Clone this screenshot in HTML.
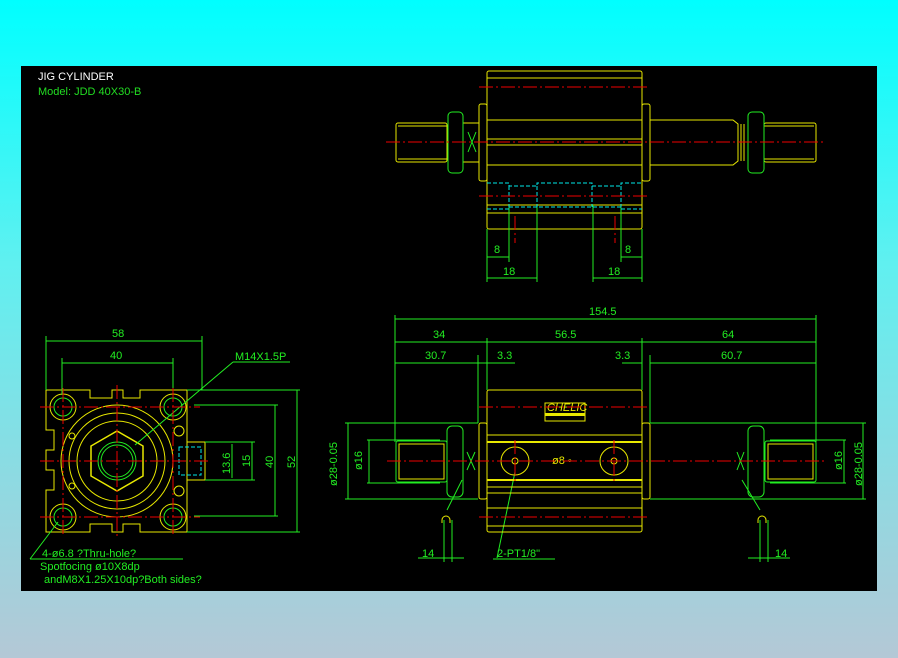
<!DOCTYPE html>
<html><head><meta charset="utf-8"><style>
html,body{margin:0;padding:0;}
body{width:898px;height:658px;background:linear-gradient(#00ffff 0%,#60f0f0 40%,#b4c8d6 100%);position:relative;overflow:hidden;}
svg{position:absolute;left:0;top:0;}
text{font-family:"Liberation Sans",sans-serif;font-size:11px;}
</style></head><body>
<svg width="898" height="658" viewBox="0 0 898 658">
<rect x="21" y="66" width="856" height="525" fill="#000"/>
<text x="38" y="80" fill="#fff" font-size="10.5">JIG  CYLINDER</text>
<text x="38" y="95" fill="#22dd22" font-size="10.5">Model:  JDD  40X30-B</text>

<!-- TOP VIEW -->
<g fill="none" stroke="#e8e800" stroke-width="1">
<rect x="487" y="71" width="155" height="158" rx="2"/>
<line x1="487" y1="78" x2="642" y2="78"/>
<line x1="487" y1="120" x2="642" y2="120"/>
<line x1="487" y1="139" x2="642" y2="139"/>
<line x1="487" y1="145" x2="642" y2="145"/>
<line x1="487" y1="165" x2="642" y2="165"/>
<line x1="487" y1="205" x2="642" y2="205"/>
<line x1="487" y1="213" x2="642" y2="213"/>
<rect x="479" y="104" width="8" height="77" rx="2"/>
<rect x="642" y="104" width="8" height="77" rx="2"/>
<rect x="396" y="123" width="51" height="39" rx="2"/>
<line x1="398" y1="126" x2="447" y2="126"/><line x1="398" y1="159" x2="447" y2="159"/>
<rect x="463" y="123" width="16" height="39"/>
<path d="M650 120 H733 L738 124 V161 L733 165 H650"/>
<rect x="764" y="123" width="52" height="39" rx="2"/>
<line x1="764" y1="126" x2="814" y2="126"/><line x1="764" y1="159" x2="814" y2="159"/>
<line x1="741" y1="124" x2="741" y2="161"/><line x1="744" y1="124" x2="744" y2="161"/>
</g>
<g fill="none" stroke="#22ee22" stroke-width="1">
<rect x="448" y="112" width="15" height="61" rx="4"/>
<rect x="748" y="112" width="16" height="61" rx="4"/>
<path d="M468 132 L476 152 M476 132 L468 152"/>
<line x1="487" y1="229" x2="487" y2="282"/><line x1="509" y1="205" x2="509" y2="262"/>
<line x1="537" y1="205" x2="537" y2="282"/>
<line x1="593" y1="205" x2="593" y2="282"/><line x1="621" y1="205" x2="621" y2="262"/>
<line x1="642" y1="229" x2="642" y2="282"/>
<line x1="487" y1="257" x2="509" y2="257"/><line x1="621" y1="257" x2="642" y2="257"/>
<line x1="487" y1="278" x2="537" y2="278"/><line x1="593" y1="278" x2="642" y2="278"/>
</g>
<g fill="#22ee22">
<text x="494" y="253">8</text><text x="625" y="253">8</text>
<text x="503" y="275">18</text><text x="608" y="275">18</text>
</g>
<g fill="none" stroke="#00e8e8" stroke-width="1" stroke-dasharray="4,2">
<path d="M487 183 H509 V186 H537 V183 H592 V186 H621 V183 H642"/>
<path d="M487 209 H509 V207 H537 H592 H621 V209 H642"/>
<line x1="509" y1="186" x2="509" y2="207"/><line x1="537" y1="186" x2="537" y2="207"/>
<line x1="592" y1="186" x2="592" y2="207"/><line x1="621" y1="186" x2="621" y2="207"/>
</g>
<g stroke="#ee0000" stroke-width="1" stroke-dasharray="14,3,2,3" fill="none">
<line x1="479" y1="87" x2="650" y2="87"/>
<line x1="386" y1="142" x2="826" y2="142"/>
<line x1="479" y1="196" x2="650" y2="196"/>
<line x1="515" y1="216" x2="515" y2="243"/><line x1="615" y1="216" x2="615" y2="243"/>
</g>

<!-- FRONT VIEW -->
<g fill="none" stroke="#22ee22" stroke-width="1">
<line x1="395" y1="315" x2="395" y2="442"/><line x1="816" y1="315" x2="816" y2="442"/>
<line x1="478" y1="355" x2="478" y2="423"/><line x1="487" y1="338" x2="487" y2="390"/>
<line x1="642" y1="338" x2="642" y2="390"/><line x1="650" y1="355" x2="650" y2="423"/>
<line x1="395" y1="319" x2="816" y2="319"/>
<line x1="395" y1="342" x2="816" y2="342"/>
<line x1="395" y1="363" x2="478" y2="363"/><line x1="478" y1="363" x2="515" y2="363"/>
<line x1="622" y1="363" x2="642" y2="363"/><line x1="650" y1="363" x2="816" y2="363"/>
<line x1="345" y1="423" x2="478" y2="423"/><line x1="345" y1="499" x2="478" y2="499"/>
<line x1="348" y1="423" x2="348" y2="499"/>
<line x1="367" y1="440" x2="440" y2="440"/><line x1="367" y1="483" x2="440" y2="483"/>
<line x1="369" y1="440" x2="369" y2="483"/>
<line x1="650" y1="423" x2="866" y2="423"/><line x1="650" y1="499" x2="866" y2="499"/>
<line x1="863" y1="423" x2="863" y2="499"/>
<line x1="770" y1="440" x2="846" y2="440"/><line x1="770" y1="483" x2="846" y2="483"/>
<line x1="844" y1="440" x2="844" y2="483"/>
<rect x="396" y="441" width="51" height="41" rx="2"/>
<rect x="765" y="441" width="51" height="41" rx="2"/>
<rect x="447" y="426" width="16" height="71" rx="5"/>
<rect x="748" y="426" width="16" height="71" rx="5"/>
<path d="M467 452 L475 470 M475 452 L467 470"/>
<path d="M737 452 L744 470 M744 452 L737 470"/>
<line x1="444" y1="520" x2="444" y2="562"/><line x1="452" y1="520" x2="452" y2="562"/>
<line x1="418" y1="558" x2="464" y2="558"/>
<line x1="760" y1="520" x2="760" y2="562"/><line x1="768" y1="520" x2="768" y2="562"/>
<line x1="748" y1="558" x2="790" y2="558"/>
<line x1="515" y1="472" x2="497" y2="558"/><line x1="493" y1="559" x2="555" y2="559"/>
<line x1="462" y1="480" x2="447" y2="510"/><line x1="742" y1="480" x2="760" y2="510"/>
</g>
<g fill="#22ee22">
<text x="589" y="315">154.5</text>
<text x="433" y="338">34</text><text x="555" y="338">56.5</text><text x="722" y="338">64</text>
<text x="425" y="359">30.7</text><text x="497" y="359">3.3</text><text x="615" y="359">3.3</text><text x="721" y="359">60.7</text>
<text x="422" y="557">14</text><text x="775" y="557">14</text>
<text x="497" y="557">2-PT1/8"</text>
<text transform="translate(337,486) rotate(-90)" font-size="10">ø28-0.05</text>
<text transform="translate(362,470) rotate(-90)">ø16</text>
<text transform="translate(842,470) rotate(-90)">ø16</text>
<text transform="translate(862,486) rotate(-90)" font-size="10">ø28-0.05</text>
</g>
<g fill="none" stroke="#e8e800" stroke-width="1">
<rect x="487" y="390" width="155" height="142" rx="2"/>
<rect x="479" y="423" width="8" height="76" rx="2"/>
<rect x="642" y="423" width="8" height="76" rx="2"/>
<line x1="487" y1="435" x2="642" y2="435"/>
<line x1="487" y1="442" x2="642" y2="442" stroke-width="2"/>
<line x1="487" y1="480" x2="642" y2="480" stroke-width="2"/>
<line x1="487" y1="487" x2="642" y2="487"/>
<line x1="487" y1="493" x2="642" y2="493"/>
<line x1="487" y1="508" x2="642" y2="508"/>
<line x1="487" y1="526" x2="642" y2="526"/>
<circle cx="515" cy="461" r="14"/><circle cx="515" cy="461" r="3"/>
<circle cx="614" cy="461" r="14"/><circle cx="614" cy="461" r="3"/>
<rect x="399" y="444" width="45" height="35"/>
<rect x="768" y="444" width="45" height="35"/>
<path d="M442 520 a4 4 0 1 1 8 0 M442 520 v3 M450 520 v3"/>
<path d="M758 520 a4 4 0 1 1 8 0 M758 520 v3 M766 520 v3"/>
<rect x="545" y="403" width="40" height="18"/>
</g>
<rect x="545" y="413" width="40" height="3" fill="#e8e800"/>
<text x="547" y="411" fill="#e8e800" font-size="7" font-style="italic">CHELIC</text>
<text x="552" y="464" fill="#e8e800" font-size="7">ø8 ◦</text>
<g stroke="#ee0000" stroke-width="1" stroke-dasharray="14,3,2,3" fill="none">
<line x1="479" y1="407" x2="650" y2="407"/>
<line x1="387" y1="461" x2="826" y2="461"/>
<line x1="479" y1="517" x2="650" y2="517"/>
<line x1="515" y1="440" x2="515" y2="483"/><line x1="614" y1="440" x2="614" y2="483"/>
</g>

<!-- END VIEW -->
<g fill="none" stroke="#e8e800" stroke-width="1">
<path d="M46 390 H90 V398 H112 V390 H123 V398 H140 V390 H187 V532 H140 V524 H123 V532 H112 V524 H90 V532 H46 V490 H54 V470 H46 V450 H54 V430 H46 Z"/>
<circle cx="117" cy="461" r="56"/>
<circle cx="117" cy="461" r="48"/>
<circle cx="117" cy="461" r="40"/>
<polygon points="117,431 143,446 143,476 117,491 91,476 91,446" stroke-width="1.5"/>
<circle cx="63" cy="407" r="13"/><circle cx="173" cy="407" r="13"/>
<circle cx="63" cy="517" r="13"/><circle cx="173" cy="517" r="13"/>
<circle cx="72" cy="436" r="3"/><circle cx="72" cy="486" r="3"/>
<circle cx="179" cy="431" r="5"/><circle cx="179" cy="491" r="5"/>
<path d="M187 442 H205 V480 H187"/>
</g>
<g fill="none" stroke="#22ee22" stroke-width="1">
<circle cx="63" cy="407" r="9"/><circle cx="173" cy="407" r="9"/>
<circle cx="63" cy="517" r="9"/><circle cx="173" cy="517" r="9"/>
<circle cx="117" cy="461" r="19"/><circle cx="117" cy="461" r="16"/>
<line x1="46" y1="336" x2="46" y2="390"/><line x1="202" y1="336" x2="202" y2="390"/>
<line x1="46" y1="341" x2="202" y2="341"/>
<line x1="62" y1="358" x2="62" y2="395"/><line x1="173" y1="358" x2="173" y2="395"/>
<line x1="62" y1="363" x2="173" y2="363"/>
<line x1="187" y1="390" x2="300" y2="390"/><line x1="187" y1="532" x2="300" y2="532"/>
<line x1="297" y1="390" x2="297" y2="532"/>
<line x1="194" y1="405" x2="278" y2="405"/><line x1="194" y1="516" x2="278" y2="516"/>
<line x1="275" y1="405" x2="275" y2="516"/>
<line x1="205" y1="442" x2="255" y2="442"/><line x1="205" y1="480" x2="255" y2="480"/>
<line x1="252" y1="442" x2="252" y2="480"/>
<line x1="232" y1="444" x2="232" y2="478"/>
<line x1="233" y1="362" x2="290" y2="362"/><line x1="233" y1="362" x2="135" y2="445"/>
<line x1="30" y1="559" x2="183" y2="559"/><line x1="30" y1="559" x2="58" y2="522"/>
</g>
<g fill="#22ee22">
<text x="112" y="337">58</text><text x="110" y="359">40</text>
<text x="235" y="360">M14X1.5P</text>
<text transform="translate(230,474) rotate(-90)">13.6</text>
<text transform="translate(250,467) rotate(-90)">15</text>
<text transform="translate(273,468) rotate(-90)">40</text>
<text transform="translate(295,468) rotate(-90)">52</text>
<text x="42" y="557" font-size="9">4-ø6.8  ?Thru-hole?</text>
<text x="40" y="570" font-size="9">Spotfocing  ø10X8dp</text>
<text x="44" y="583" font-size="9">andM8X1.25X10dp?Both sides?</text>
</g>
<g fill="none" stroke="#00e8e8" stroke-dasharray="4,2">
<rect x="179" y="447" width="22" height="28"/>
</g>
<g stroke="#ee0000" stroke-width="1" stroke-dasharray="14,3,2,3" fill="none">
<line x1="40" y1="461" x2="210" y2="461"/>
<line x1="117" y1="385" x2="117" y2="537"/>
<line x1="40" y1="407" x2="200" y2="407"/><line x1="40" y1="517" x2="200" y2="517"/>
<line x1="63" y1="388" x2="63" y2="537"/><line x1="173" y1="388" x2="173" y2="537"/>
</g>
</svg>
</body></html>
